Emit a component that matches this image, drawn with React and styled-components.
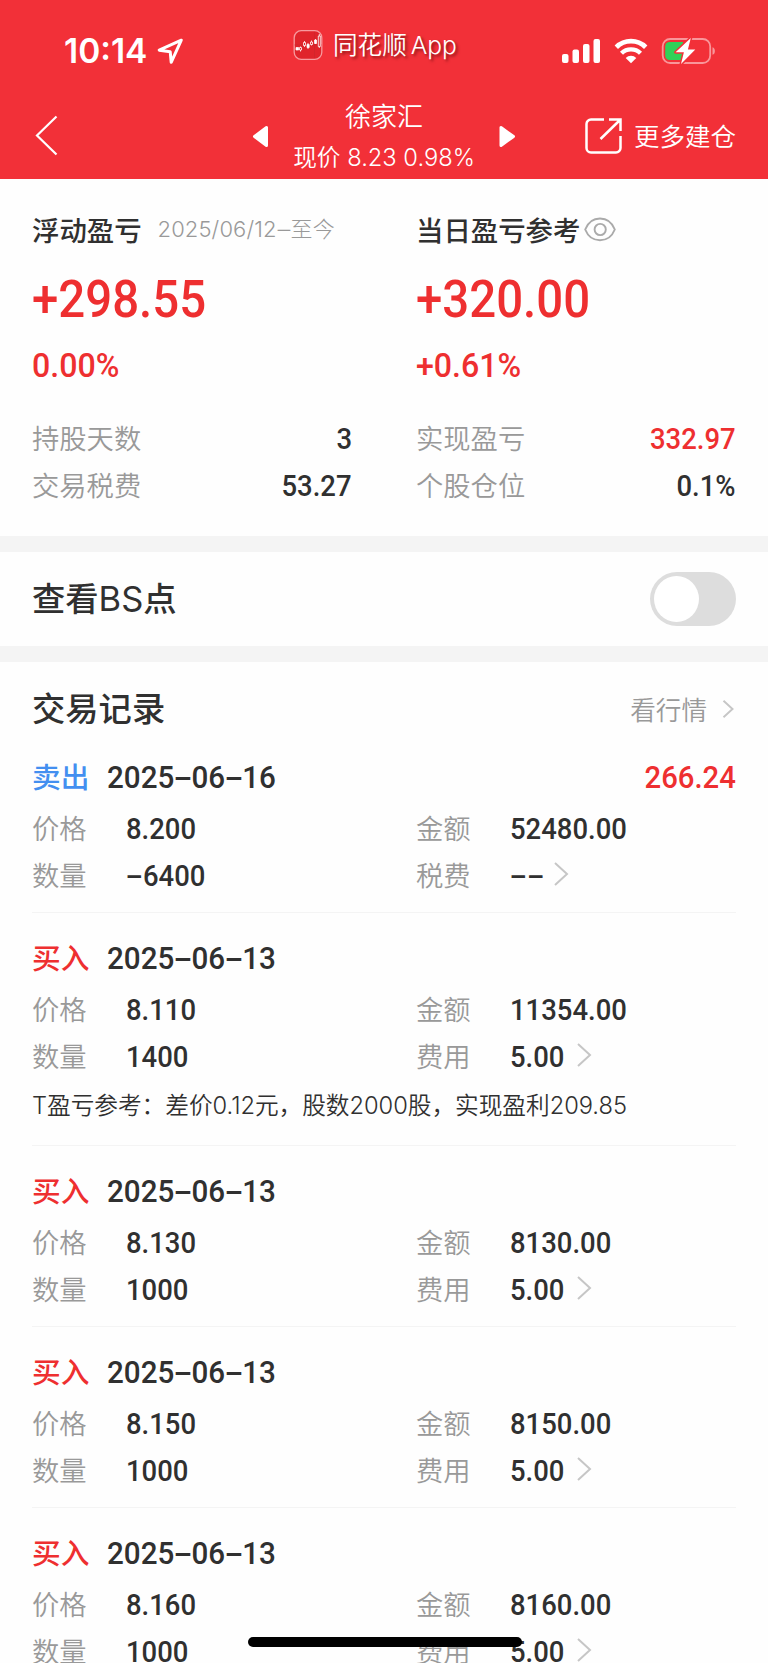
import React from "react";
import styled, { createGlobalStyle } from "styled-components";

const RED = "#ee2f30";
const HEADER_RED = "#f23038";
const INK = "#303030";
const GREY = "#999";
const CJK = '"Noto Sans CJK SC", sans-serif';

const GlobalStyle = createGlobalStyle`
  * { box-sizing: border-box; }
  html, body { margin: 0; background: #fff; }
  body { font-family: "Inter", ${CJK}; color: ${INK}; }
`;

const Screen = styled.main`
  position: relative;
  width: 768px;
  height: 1663px;
  overflow: hidden;
  background: #fefefe;
`;

/* ---------- header ---------- */

const Header = styled.header`
  height: 179px;
  background: ${HEADER_RED};
  color: #fff;
`;

const StatusBar = styled.div`
  display: grid;
  grid-template-columns: 293px 1fr 207px;
  height: 92px;
`;

const Clock = styled.div`
  display: flex;
  gap: 10px;
  padding: 32px 0 0 64px;
  font: 600 33.5px/39px "Inter", sans-serif;
  svg { margin-top: 6px; }
`;

const AppTag = styled.div`
  display: flex;
  gap: 10px;
  padding-top: 29px;
  font: 400 24.6px/32px "Inter", ${CJK};
  font-weight: 350;
  word-spacing: -3px;
  text-shadow: 2px 2px 3px rgba(70, 0, 0, 0.6);
  white-space: pre;
  svg { margin-top: 1px; }
`;

const StatusIcons = styled.div`
  display: flex;
  gap: 13px;
  padding-top: 37px;
`;

const NavBar = styled.div`
  display: grid;
  grid-template-columns: 252px 264px 1fr;
  height: 87px;
`;

const BackButton = styled.button`
  display: flex;
  padding: 22px 0 0 34px;
  border: 0;
  background: none;
`;

const StockSwitcher = styled.div`
  display: flex;
  justify-content: space-between;
  > svg { margin-top: 33px; }
`;

const StockTitle = styled.div`
  display: flex;
  flex-direction: column;
  align-items: center;
  padding-top: 4px;
`;

const StockName = styled.div`
  font: 400 26px/38px ${CJK};
  font-weight: 350;
`;

const StockPrice = styled.div`
  padding-top: 5px;
  font: 400 23.7px/38px "Inter", ${CJK};
  font-weight: 350;
  white-space: nowrap;
`;

const MoreButton = styled.div`
  display: flex;
  justify-content: flex-end;
  gap: 12px;
  padding: 25px 32px 0 0;
  font: 400 25.5px/36px ${CJK};
  font-weight: 350;
  svg { margin-top: 0; }
`;

/* ---------- shared numerals ---------- */

const Num = styled.span`
  display: inline-block;
  font-family: "Roboto", sans-serif;
  font-weight: 500;
  font-size: ${(p) => p.$size || 30}px;
  line-height: 1;
  color: ${(p) => (p.$red ? RED : INK)};
  transform: scaleX(${(p) => p.$stretch || 0.915});
  transform-origin: ${(p) => (p.$right ? "right" : "left")} center;
  white-space: nowrap;
`;

const Dash = styled.span`
  display: inline-block;
  width: ${(p) => p.$w || 18.5}px;
  text-align: center;
  transform: scaleX(1.9);
`;

/* ---------- summary ---------- */

const Summary = styled.section`
  display: grid;
  grid-template-columns: 320px 320px;
  column-gap: 64px;
  height: 357px;
  padding: 30px 32px 0;
`;

const SummaryHead = styled.div`
  display: flex;
  align-items: center;
  height: 40px;
  font: 500 27.4px/40px ${CJK};
  svg { margin-left: 4px; }
`;

const Period = styled.span`
  margin-left: 16px;
  font: 400 22px/40px "Inter", ${CJK};
  font-weight: 300;
  letter-spacing: 0.1px;
  color: ${GREY};
`;

const Amount = styled.div`
  display: flex;
  align-items: center;
  height: 56px;
  margin-top: 23px;
`;

const Rate = styled.div`
  display: flex;
  align-items: center;
  height: 40px;
  margin-top: 17px;
`;

const Stats = styled.div`
  margin-top: 30px;
`;

const StatRow = styled.div`
  display: flex;
  align-items: center;
  justify-content: space-between;
  height: 47px;
`;

const Label = styled.span`
  padding-bottom: 4px;
  font: 300 27.3px/40px ${CJK};
  font-weight: 350;
  color: ${GREY};
`;

const Band = styled.div`
  height: 16px;
  background: #f4f4f4;
`;

/* ---------- BS switch ---------- */

const SwitchRow = styled.section`
  display: flex;
  align-items: center;
  justify-content: space-between;
  height: 94px;
  padding: 0 32px;
`;

const SectionTitle = styled.h2`
  margin: 0;
  font: 500 33.3px/46px "Inter", ${CJK};
`;

const Latin = styled.span`
  font-weight: 400;
  font-size: 34.5px;
`;

const Switch = styled.div`
  display: flex;
  align-items: center;
  width: 86px;
  height: 54px;
  padding: 4px;
  border-radius: 27px;
  background: #ddd;
`;

const Knob = styled.div`
  width: 45px;
  height: 46px;
  border-radius: 50%;
  background: #fff;
`;

/* ---------- records ---------- */

const RecordsHead = styled.div`
  display: flex;
  align-items: center;
  justify-content: space-between;
  height: 70px;
  padding: 24px 32px 0;
`;

const QuoteLink = styled.span`
  display: flex;
  align-items: center;
  gap: 15px;
  padding-right: 2px;
  font: 300 25.6px/40px ${CJK};
  font-weight: 350;
  color: ${GREY};
`;

const Record = styled.article`
  margin: 0 32px;
  padding: 25px 0 ${(p) => (p.$note ? 15 : 13)}px;
  border-bottom: 1px solid #f4f4f4;
`;

const RecordHead = styled.div`
  display: flex;
  align-items: center;
  height: 40px;
  margin-bottom: 8px;
  > :last-child:not(:nth-child(2)) { margin-left: auto; }
`;

const Side = styled.span`
  width: 75px;
  padding-bottom: 2px;
  font: 500 28.7px/40px ${CJK};
  color: ${(p) => (p.$sell ? "#438ff0" : RED)};
`;

const Fields = styled.div`
  display: grid;
  grid-template-columns: 384px 320px;
  grid-auto-rows: 47px;
`;

const Field = styled.div`
  display: flex;
  align-items: center;
  ${Label} { width: 94px; }
  svg { margin: 0 0 3px 6px; }
`;

const Note = styled.p`
  height: 50px;
  margin: 0;
  font: 400 23.7px/52px "Inter", ${CJK};
  font-weight: 350;
  letter-spacing: -0.04px;
  white-space: nowrap;
`;

const HomeIndicator = styled.div`
  position: absolute;
  left: 248px;
  bottom: 16px;
  width: 274px;
  height: 10px;
  border-radius: 5px;
  background: #000;
`;

/* ---------- icons ---------- */

const LocationIcon = () => (
  <svg width="27" height="27" viewBox="0 0 27 27" fill="none" stroke="#fff" strokeWidth="3" strokeLinejoin="round">
    <path d="M24.3 2.2 2.2 12.2l11 1.5 1 10.6z" />
  </svg>
);

const AppIcon = () => (
  <svg width="30" height="30" viewBox="0 0 29 30" fill="none" stroke="#fff">
    <rect x=".7" y=".7" width="27.6" height="28.6" rx="7" fill="#e0242b" stroke="#f79a9e" strokeWidth="1.3" />
    <path d="M21 2v26M1 15h27" stroke="#c9272b" strokeWidth=".6" />
    <path d="M7 16.500v5M11 11v6M14.500 13v6M18 10.500v5M22 9v5M25.800 4v14" strokeWidth=".8" />
    <path d="M2.500 17.500h2.600v2.500H2.500zM13.500 14.500h2.200v3h-2.200zM21 10h2v3.500h-2z" fill="#fff" strokeWidth=".7" />
    <path d="M6 17.500h2v2.500H6zM10 12.500h2v3h-2zM17 12h2v2.500h-2zM24.800 6h2v10.500h-2z" fill="#e0242b" strokeWidth=".8" />
  </svg>
);

const SignalIcon = () => (
  <svg width="40" height="27" viewBox="0 0 40 27" fill="#fff">
    <rect x="1" y="17" width="6.500" height="9" rx="2" />
    <rect x="11.500" y="12.500" width="6.500" height="13.500" rx="2" />
    <rect x="22" y="7" width="6.500" height="19" rx="2" />
    <rect x="32.500" y="2" width="6.500" height="24" rx="2" />
  </svg>
);

const WifiIcon = () => (
  <svg width="34" height="27" viewBox="0 0 34 27" fill="none" stroke="#fff">
    <path d="M2.300 10.200a21 21 0 0 1 29.400 0" strokeWidth="4.800" />
    <path d="M7.500 16.200a13.600 13.600 0 0 1 19 0" strokeWidth="4.400" />
    <path d="M17 26.200l-5.300-5.300a7.600 7.600 0 0 1 10.600 0z" fill="#fff" stroke="none" />
  </svg>
);

const BatteryIcon = () => (
  <svg width="56" height="28" viewBox="0 0 56 28" fill="none">
    <rect x="1.700" y="2" width="47.500" height="24" rx="7.500" stroke="#f9969a" strokeWidth="1.800" />
    <path d="M51.500 10.200c3.200.8 3.200 6.800 0 7.600z" fill="#f9969a" />
    <path d="M8.500 5H22v18H8.500A4.300 4.300 0 0 1 4.200 18.700V9.300A4.300 4.300 0 0 1 8.500 5z" fill="#30d158" />
    <path d="M29.800.9 14.600 15.300h8.300l-2.900 11.800L34.300 12.500h-7.400z" fill="#fff" stroke={HEADER_RED} strokeWidth="3" strokeLinejoin="round" paintOrder="stroke" />
  </svg>
);

const BackIcon = () => (
  <svg width="26" height="42" viewBox="0 0 26 42" fill="none" stroke="#fff" strokeWidth="2.200">
    <path d="M22.500 2.500 3 21.500l19.500 19" />
  </svg>
);

const Triangle = ({ flip }) => (
  <svg width="17" height="23" viewBox="0 0 17 23" fill="#fff" stroke="#fff" strokeWidth="3" strokeLinejoin="round">
    <path d={flip ? "M2 2.500v18L14.500 11.500z" : "M14.500 2.500v18L2.500 11.500z"} />
  </svg>
);

const OpenIcon = () => (
  <svg width="38" height="38" viewBox="0 0 38 38" fill="none" stroke="#fff" strokeWidth="2.500">
    <path d="M20 2.500H7A4.500 4.500 0 0 0 2.500 7v24A4.500 4.500 0 0 0 7 35.500h25a4.500 4.500 0 0 0 4.500-4.500V19M25 2.500h11.500v11.500M36.500 2.500l-20 19.500" />
  </svg>
);

const EyeIcon = () => (
  <svg width="32" height="25" viewBox="0 0 32 25" fill="none" stroke="#aaa" strokeWidth="1.900">
    <path d="M1.200 12.500C4 5.500 9.500 1.500 16 1.500s12 4 14.800 11C28 19.500 22.500 23.300 16 23.300S4 19.500 1.200 12.500z" />
    <circle cx="16.200" cy="12.500" r="5.600" />
  </svg>
);

const Chevron = ({ small }) => (
  <svg
    width={small ? 12 : 16}
    height={small ? 20 : 26}
    viewBox="0 0 16 26"
    fill="none"
    stroke="#c6c6c6"
    strokeWidth={small ? 2.600 : 2}
  >
    <path d="M2 2l12 11L2 24" />
  </svg>
);

/* ---------- data ---------- */

const summary = [
  {
    title: "浮动盈亏",
    period: "2025/06/12",
    amount: "+298.55",
    rate: "0.00%",
    stats: [["持股天数", "3"], ["交易税费", "53.27"]],
  },
  {
    title: "当日盈亏参考",
    eye: true,
    amount: "+320.00",
    rate: "+0.61%",
    stats: [["实现盈亏", "332.97", true], ["个股仓位", "0.1%"]],
  },
];

const records = [
  { sell: true, date: "2025-06-16", profit: "266.24", price: "8.200", total: "52480.00", qty: "-6400", fee: "--" },
  {
    date: "2025-06-13", price: "8.110", total: "11354.00", qty: "1400", fee: "5.00",
    note: "T盈亏参考：差价0.12元，股数2000股，实现盈利209.85",
  },
  { date: "2025-06-13", price: "8.130", total: "8130.00", qty: "1000", fee: "5.00" },
  { date: "2025-06-13", price: "8.150", total: "8150.00", qty: "1000", fee: "5.00" },
  { date: "2025-06-13", price: "8.160", total: "8160.00", qty: "1000", fee: "5.00" },
];

const withDashes = (text) =>
  text.split(/(-)/).filter(Boolean).map((part, i) => (part === "-" ? <Dash key={i}>-</Dash> : part));

const TradeRecord = ({ r }) => (
  <Record $note={!!r.note}>
    <RecordHead>
      <Side $sell={r.sell}>{r.sell ? "卖出" : "买入"}</Side>
      <Num $size={32} $stretch={0.925}>{withDashes(r.date)}</Num>
      {r.profit && <Num $size={32} $red $right>{r.profit}</Num>}
    </RecordHead>
    <Fields>
      <Field><Label>价格</Label><Num>{r.price}</Num></Field>
      <Field><Label>金额</Label><Num>{r.total}</Num></Field>
      <Field><Label>数量</Label><Num>{withDashes(r.qty)}</Num></Field>
      <Field>
        <Label>{r.sell ? "税费" : "费用"}</Label>
        <Num>{withDashes(r.fee)}</Num>
        <Chevron />
      </Field>
    </Fields>
    {r.note && <Note>{r.note}</Note>}
  </Record>
);

export default function App() {
  return (
    <Screen>
      <GlobalStyle />
      <Header>
        <StatusBar>
          <Clock>10:14<LocationIcon /></Clock>
          <AppTag><AppIcon />同花顺 App</AppTag>
          <StatusIcons><SignalIcon /><WifiIcon /><BatteryIcon /></StatusIcons>
        </StatusBar>
        <NavBar>
          <BackButton aria-label="返回"><BackIcon /></BackButton>
          <StockSwitcher>
            <Triangle />
            <StockTitle>
              <StockName>徐家汇</StockName>
              <StockPrice>现价 8.23 0.98%</StockPrice>
            </StockTitle>
            <Triangle flip />
          </StockSwitcher>
          <MoreButton><OpenIcon />更多建仓</MoreButton>
        </NavBar>
      </Header>

      <Summary>
        {summary.map((s) => (
          <div key={s.title}>
            <SummaryHead>
              {s.title}
              {s.period && <Period>{s.period}<Dash $w={14}>-</Dash>至今</Period>}
              {s.eye && <EyeIcon />}
            </SummaryHead>
            <Amount><Num $size={51.5} $stretch={0.92} $red>{s.amount}</Num></Amount>
            <Rate><Num $size={34} $stretch={0.945} $red>{s.rate}</Num></Rate>
            <Stats>
              {s.stats.map(([label, value, red]) => (
                <StatRow key={label}>
                  <Label>{label}</Label>
                  <Num $red={red} $right>{value}</Num>
                </StatRow>
              ))}
            </Stats>
          </div>
        ))}
      </Summary>

      <Band />
      <SwitchRow>
        <SectionTitle>查看<Latin>BS</Latin>点</SectionTitle>
        <Switch role="switch" aria-checked="false"><Knob /></Switch>
      </SwitchRow>
      <Band />

      <RecordsHead>
        <SectionTitle>交易记录</SectionTitle>
        <QuoteLink>看行情<Chevron small /></QuoteLink>
      </RecordsHead>
      {records.map((r, i) => <TradeRecord key={i} r={r} />)}

      <HomeIndicator />
    </Screen>
  );
}
